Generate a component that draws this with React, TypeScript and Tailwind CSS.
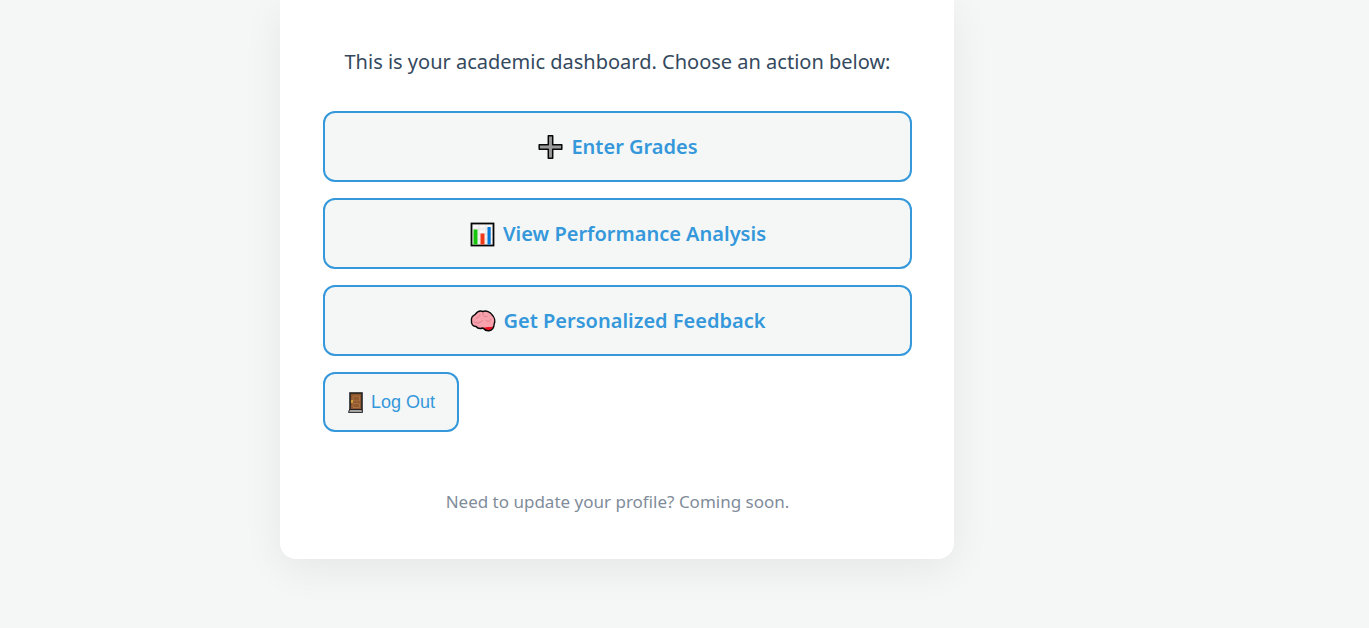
import type { ReactNode } from "react";

function PlusIcon() {
  return (
    <svg viewBox="0 0 26 26" className="size-[26px] shrink-0" aria-hidden="true">
      <path
        d="M11.300 1.700h4.400v9.100h9.100v4.400h-9.100v9.100h-4.400v-9.100H2.200v-4.400h9.100z"
        fill="#999999"
        stroke="#080808"
        strokeWidth="1.500"
        strokeLinejoin="round"
      />
    </svg>
  );
}

function ChartIcon() {
  return (
    <svg viewBox="0 0 26 26" className="size-[26px] shrink-0" aria-hidden="true">
      <rect x="2.500" y="2.500" width="22" height="22" fill="#f7f7f7" stroke="#050505" strokeWidth="1.800" />
      <path d="M4 8h19M4 13h19M4 18h19M10 4v19M17 4v19" stroke="#dedede" strokeWidth="0.700" />
      <rect x="4.500" y="8.500" width="4" height="15" fill="#16c60c" />
      <rect x="11.500" y="12.500" width="4" height="11" fill="#f03a17" />
      <rect x="18.500" y="6" width="3.200" height="17.500" fill="#0078d7" />
    </svg>
  );
}

function BrainIcon() {
  return (
    <svg viewBox="0 0 26 26" className="size-[26px] shrink-0" aria-hidden="true">
      <path
        d="M13 3.500C16 2.300 20.500 3.800 22 6.700C24.500 9 25.500 13 24.200 16C24 19.500 22.500 22.300 19 22.700C16 23 14.500 22 13 20C10 21 7.500 20.500 6 18.500C3 18.500 1 16 1.500 13C1 9.500 3 7.500 5 6.700C7 3.800 10 2.300 13 3.500Z"
        fill="#f7a1ac"
      />
      <path d="M23 18.500C20.500 19.300 17 18.800 13 20C14.500 22 16 23 19 22.700C21.500 22.300 22.700 20.800 23 18.500Z" fill="#e81224" />
      <path
        d="M6 10.500C7.500 9 9.500 9.500 10 7M13 5C12.500 8 14.500 9.500 17 8.500M4.500 14C7.500 16 11 14.500 12.500 12.500M16 12.500C18 14 20 13.500 21 11"
        fill="none"
        stroke="#df7f8d"
        strokeWidth="1"
        strokeLinecap="round"
      />
      <path
        d="M13 3.500C16 2.300 20.500 3.800 22 6.700C24.500 9 25.500 13 24.200 16C24 19.500 22.500 22.300 19 22.700C16 23 14.500 22 13 20C10 21 7.500 20.500 6 18.500C3 18.500 1 16 1.500 13C1 9.500 3 7.500 5 6.700C7 3.800 10 2.300 13 3.500Z"
        fill="none"
        stroke="#080808"
        strokeWidth="1.400"
      />
    </svg>
  );
}

function DoorIcon() {
  return (
    <svg viewBox="0 0 16 22" className="h-[22px] w-4 shrink-0" aria-hidden="true">
      <rect x="3" y="2" width="12" height="17" fill="#8e562e" stroke="#222222" strokeWidth="1.600" />
      <path d="M6 5h6.500v5H6zM6 12.500h6.500v4H6z" fill="#93592f" stroke="#b07848" strokeWidth="0.800" />
      <path d="M5 9v3" stroke="#f5c842" strokeWidth="1.300" />
      <path d="M2.500 18.600h12.500l.6 2.800H1.500z" fill="#b5b5b5" stroke="#111111" strokeWidth="0.900" />
    </svg>
  );
}

function ActionLink({ href, icon, children }: { href: string; icon: ReactNode; children: ReactNode }) {
  return (
    <a
      href={href}
      className="flex items-center justify-center gap-2 rounded-xl border-2 border-[#3498db] bg-[#f4f7f6] px-5 py-[18px] text-[20px] leading-[31px] font-semibold text-[#3498db]"
    >
      {icon}
      <span>{children}</span>
    </a>
  );
}

export default function App() {
  return (
    <div className="flex min-h-screen items-start justify-center bg-[#f4f7f6] pr-[135px] pb-[69px] font-['Noto_Sans','Open_Sans',sans-serif]">
      <main className="w-full max-w-[674px] rounded-b-2xl bg-white pr-[42px] pl-[43px] pt-11 pb-[43px] shadow-[0_10px_40px_rgba(0,0,0,0.065)]">
        <p className="text-center text-[20px] leading-9 text-[#34495e]">
          This is your academic dashboard. Choose an action below:
        </p>
        <div className="mt-[31px] flex flex-col gap-4">
          <ActionLink href="#grades" icon={<PlusIcon />}>
            Enter Grades
          </ActionLink>
          <ActionLink href="#analysis" icon={<ChartIcon />}>
            View Performance Analysis
          </ActionLink>
          <ActionLink href="#feedback" icon={<BrainIcon />}>
            Get Personalized Feedback
          </ActionLink>
          <button
            type="button"
            className="flex cursor-pointer items-center gap-2 self-start rounded-xl border-2 border-[#3498db] bg-[#f4f7f6] px-[22px] py-4 font-['Liberation_Sans',sans-serif] text-[18px] leading-6 text-[#3498db]"
          >
            <DoorIcon />
            Log Out
          </button>
        </div>
        <p className="mt-14 text-center text-[17px] leading-7 text-[#7f8c9a]">
          Need to update your profile? Coming soon.
        </p>
      </main>
    </div>
  );
}
